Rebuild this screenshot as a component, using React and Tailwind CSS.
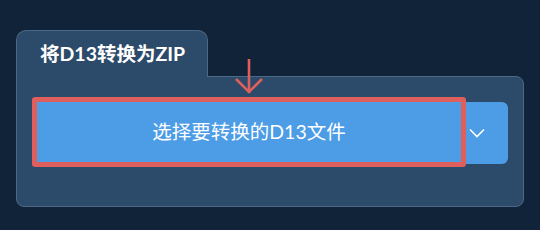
import React from 'react';

const font = { fontFamily: 'Lato, "Noto Sans CJK SC", sans-serif' };

const ChevronDown = () => (
  <svg width="16" height="10" viewBox="0 0 16 10" fill="none">
    <polyline points="1,1.5 8,8.5 15,1.5" stroke="#ffffff" strokeWidth="1.6" />
  </svg>
);

const ArrowDown = () => (
  <svg width="30" height="38" viewBox="0 0 30 38" fill="none">
    <line x1="15" y1="1" x2="15" y2="35" stroke="#de5f5b" strokeWidth="2.6" />
    <polyline points="2,21 15,34 28,21" stroke="#de5f5b" strokeWidth="2.6" />
  </svg>
);

export default function App() {
  return (
    <div className="relative min-h-screen bg-[#112339] px-4 pt-[30px]" style={font}>
      <div className="flex">
        <div className="relative z-10 -mb-px h-[47px] w-[192px] rounded-t-[10px] border border-b-0 border-[#4d6886] bg-[#2c4a6a] pl-[23px] pt-[9px]">
          <span className="text-[19.5px] font-bold leading-[28px] text-white">将D13转换为ZIP</span>
        </div>
      </div>
      <div className="rounded-b-lg rounded-tr-lg border border-[#4d6886] bg-[#2c4a6a] pb-[42px] pl-5 pr-[15px] pt-[25px]">
        <div className="flex items-start">
          <div className="rounded-[3px] border-[5px] border-[#de5f5b] -m-[5px] mr-0">
            <button className="flex h-[60px] w-[424px] items-center justify-center bg-[#4c9ce6] text-[19.5px] text-white">
              选择要转换的D13文件
            </button>
          </div>
          <button className="flex h-[62px] w-[42px] items-center justify-start rounded-r-md bg-[#4c9ce6] pl-[3px]">
            <ChevronDown />
          </button>
        </div>
      </div>
      <div className="absolute left-[234px] top-[58px]">
        <ArrowDown />
      </div>
    </div>
  );
}
